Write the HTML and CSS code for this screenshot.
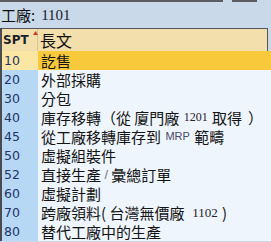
FILE: index.html
```html
<!DOCTYPE html>
<html>
<head>
<meta charset="utf-8">
<link rel="stylesheet" href="styles.css">
</head>
<body>
<div class="topbar"><span class="seg a"></span><span class="seg b"></span></div>
<div class="info"><span class="lbl">工廠:</span><span class="val">1101</span></div>
<div class="grid">
  <div class="head">
    <div class="hc spt">SPT<svg class="mark" width="5" height="4" viewBox="0 0 5 4"><path d="M0 4 L2.5 0 L5 4 Z" fill="#d23a2a"/></svg></div>
    <div class="hc txt">長文</div>
  </div>
  <div class="row sel"><div class="c num">10</div><div class="c txt">訖售</div></div>
  <div class="row"><div class="c num">20</div><div class="c txt">外部採購</div></div>
  <div class="row"><div class="c num">30</div><div class="c txt">分包</div></div>
  <div class="row"><div class="c num">40</div><div class="c txt">庫存移轉（從&nbsp;廈門廠&nbsp;<span class="lat s1">1201</span>&nbsp;取得<span class="wide">）</span></div></div>
  <div class="row"><div class="c num">45</div><div class="c txt">從工廠移轉庫存到&nbsp;<span class="lat mrp">MRP</span>&nbsp;範疇</div></div>
  <div class="row"><div class="c num">50</div><div class="c txt">虛擬組裝件</div></div>
  <div class="row"><div class="c num">52</div><div class="c txt">直接生產&nbsp;<span class="slash">/</span>&nbsp;彙總訂單</div></div>
  <div class="row"><div class="c num">60</div><div class="c txt">虛擬計劃</div></div>
  <div class="row"><div class="c num">70</div><div class="c txt">跨廠領料(&nbsp;台灣無價廠&nbsp;&nbsp;<span class="lat s2">1102</span>&nbsp;)</div></div>
  <div class="row"><div class="c num">80</div><div class="c txt">替代工廠中的生產</div></div>
</div>
</body>
</html>
```

FILE: styles.css
```css
html, body {
  margin: 0;
  padding: 0;
}
body {
  width: 271px;
  height: 242px;
  overflow: hidden;
  background: #c9d9ea;
  font-family: "Noto Sans CJK TC", sans-serif;
}
.topbar {
  height: 2px;
  display: flex;
}
.seg {
  display: block;
  height: 2px;
  background: #5b5d62;
}
.seg.a { width: 223px; }
.seg.b { width: 25px; margin-left: 9px; }
.info {
  height: 26px;
  display: flex;
  align-items: center;
  padding-left: 1px;
  color: #111;
}
.info .lbl {
  font-size: 15px;
  line-height: 20px;
}
.info .val {
  font-family: "Liberation Serif", serif;
  font-size: 15px;
  margin-left: 6px;
  color: #1a1a2a;
}
.grid {
  border-left: 2px solid #4a4c52;
}
.head {
  width: 265px;
  height: 22px;
  display: grid;
  grid-template-columns: 36px 1fr;
  background: #f3dfab;
  border-top: 1px solid #55575c;
  border-right: 1px solid #55575c;
}
.hc {
  display: flex;
  align-items: center;
  position: relative;
  line-height: 22px;
}
.hc.spt {
  font-family: "DejaVu Sans", sans-serif;
  font-weight: bold;
  font-size: 12px;
  color: #1b1f2a;
  padding-left: 1px;
  border-right: 1px solid #d8c48e;
}
.mark {
  position: absolute;
  left: 31px;
  top: 2px;
}
.hc.txt {
  font-size: 16px;
  color: #111;
  padding-left: 2px;
}
.row {
  height: 19px;
  display: grid;
  grid-template-columns: 36px 1fr;
}
.c {
  display: flex;
  align-items: center;
  white-space: nowrap;
  overflow: hidden;
  line-height: 19px;
}
.c.num {
  background: #b7d8f4;
  font-family: "DejaVu Sans", sans-serif;
  font-size: 12.5px;
  color: #22336a;
  padding-left: 2px;
}
.c.txt {
  background: #eef5fc;
  font-size: 15px;
  color: #141414;
  padding-left: 3px;
}
.row.sel .num {
  background: #fbe6a3;
}
.row.sel .txt {
  background: #f9c93c;
}
.lat {
  margin: 0 1px;
}
.s1 {
  font-family: "Liberation Serif", serif;
  font-size: 12px;
  color: #2a2030;
}
.s2 {
  font-family: "Liberation Serif", serif;
  font-size: 13px;
  color: #2a2030;
}
.wide {
  margin-left: 6px;
}
.mrp {
  font-family: "Liberation Sans", sans-serif;
  font-size: 11px;
  color: #4c4866;
}
.slash {
  font-family: "Liberation Sans", sans-serif;
  font-size: 13px;
  color: #777;
}
```
